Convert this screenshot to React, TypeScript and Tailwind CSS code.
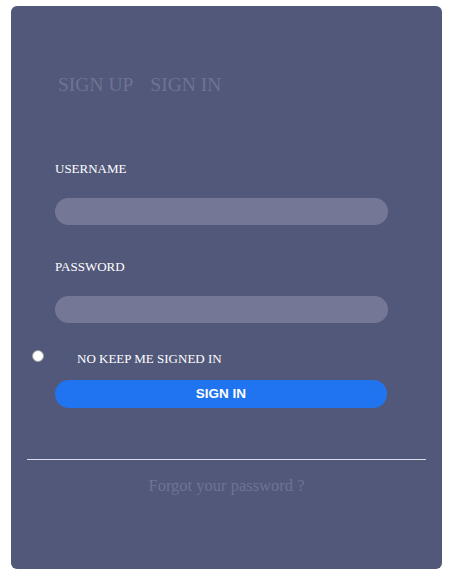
import React from "react";

export default function App() {
  const serif = { fontFamily: '"Liberation Serif", "Times New Roman", serif' };
  return (
    <div className="w-[449px] h-[574px] bg-white pt-[6px] pl-[11px]" style={serif}>
      <div className="w-[431px] h-[563px] bg-[#52587a] rounded-[6px] flex flex-col">
        <div className="mt-[67px] ml-[47px] h-[23px] text-[19.5px] leading-[23px] text-[#6e7396] flex gap-[17px]">
          <span>SIGN UP</span>
          <span>SIGN IN</span>
        </div>

        <div className="mt-[65px] ml-[44px] h-[15px] text-[13px] leading-[15px] text-white">USERNAME</div>
        <div className="mt-[22px] ml-[44px] w-[333px] h-[27px] rounded-full bg-[#747896]" />

        <div className="mt-[34px] ml-[44px] h-[15px] text-[13px] leading-[15px] text-white">PASSWORD</div>
        <div className="mt-[22px] ml-[44px] w-[333px] h-[27px] rounded-full bg-[#747896]" />

        <div className="mt-[28px] h-[15px] flex items-start">
          <div className="ml-[21px] mt-[-1px] w-[12px] h-[12px] rounded-full bg-white border border-[#9a9a9a]" />
          <span className="ml-[33px] text-[13px] leading-[15px] text-white">NO KEEP ME SIGNED IN</span>
        </div>

        <div
          className="mt-[14px] ml-[44px] w-[332px] h-[28px] rounded-full bg-[#2174f0] flex items-center justify-center text-white text-[13.5px] font-bold"
          style={{ fontFamily: '"Liberation Sans", Arial, sans-serif' }}
        >
          SIGN IN
        </div>

        <div className="mt-[51px] mx-[16px] h-px bg-[#dcdde6]" />

        <div className="mt-[17px] text-center text-[16.5px] leading-[18px] text-[#6e7396]">Forgot your password ?</div>
      </div>
    </div>
  );
}
